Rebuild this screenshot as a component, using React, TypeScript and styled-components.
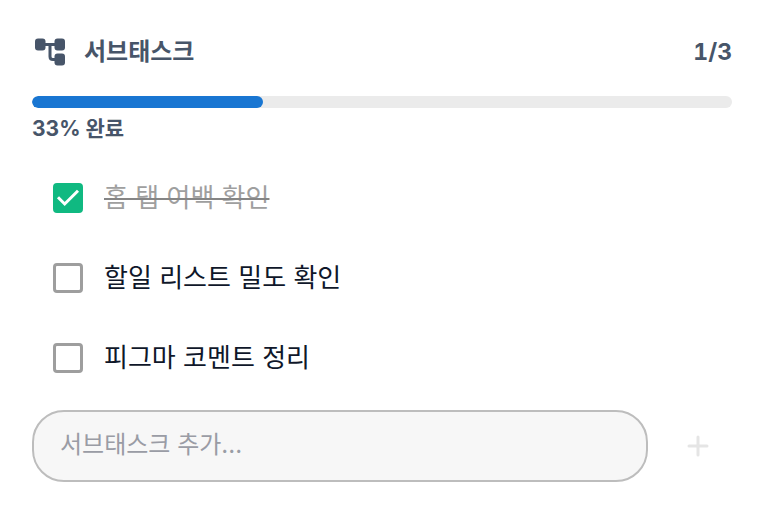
import React, { useState } from "react";
import styled, { createGlobalStyle } from "styled-components";

const GlobalStyle = createGlobalStyle`
  *, *::before, *::after { box-sizing: border-box; }
  body {
    margin: 0;
    background: #ffffff;
    color: #0f172a;
    font-family: Inter, "Noto Sans CJK KR", sans-serif;
  }
`;

const Panel = styled.main`
  padding: 32px;
`;

const Header = styled.header`
  display: flex;
  align-items: center;
  gap: 16px;
  height: 40px;
  color: #475569;
`;

const Title = styled.h2`
  flex: 1;
  margin: 0;
  font-size: 24px;
  line-height: 40px;
  font-weight: 700;
`;

const Count = styled.span`
  font-size: 23px;
  line-height: 40px;
  font-weight: 700;
  font-variant-numeric: tabular-nums;
`;

const Track = styled.div`
  height: 12px;
  margin-top: 24px;
  border-radius: 6px;
  background: #ebebeb;
  overflow: hidden;
`;

const Fill = styled.div`
  height: 100%;
  border-radius: 6px;
  background: #1976d2;
`;

const Caption = styled.p`
  margin: 4px 0 0;
  font-size: 21px;
  line-height: 34px;
  font-weight: 700;
  color: #475569;
`;

const List = styled.ul`
  list-style: none;
  margin: 12px 0 0;
  padding: 0;
`;

const Row = styled.label<{ $done: boolean }>`
  display: flex;
  align-items: center;
  gap: 16px;
  height: 80px;
  padding-left: 16px;
  font-size: 26px;
  line-height: 40px;
  color: ${(p) => (p.$done ? "#9f9f9f" : "#0f172a")};
  text-decoration: ${(p) => (p.$done ? "line-through 2px #858585" : "none")};
`;

const CheckHolder = styled.span`
  display: grid;
  width: 40px;
  height: 40px;
  place-items: center;

  > * { grid-area: 1 / 1; }
`;

const Check = styled.input`
  appearance: none;
  width: 30px;
  height: 30px;
  margin: 0;
  border: 3px solid #9e9e9e;
  border-radius: 4px;

  &:checked {
    border-color: #10b981;
    background: #10b981;
  }
`;

const Tick = styled.svg`
  width: 30px;
  height: 30px;
  pointer-events: none;
`;

const AddForm = styled.form`
  display: flex;
  align-items: center;
  gap: 16px;
  margin-top: 12px;
`;

const AddInput = styled.input`
  flex: 1;
  min-width: 0;
  height: 72px;
  padding: 0 26px 4px;
  border: 2px solid #bdbdbd;
  border-radius: 32px;
  background: #f7f7f7;
  color: #0f172a;
  font: inherit;
  font-size: 24px;

  &::placeholder { color: #9a9ca5; opacity: 1; }
`;

const AddButton = styled.button`
  display: grid;
  place-items: center;
  width: 68px;
  height: 68px;
  padding: 0;
  border: 0;
  background: none;
  color: #e5e5e5;
`;

const TreeIcon = () => (
  <svg width="36" height="36" viewBox="0 0 24 24" aria-hidden>
    <g fill="currentColor">
      <rect x="2" y="3" width="7" height="8" rx="2" />
      <rect x="15" y="3" width="7" height="8" rx="2" />
      <rect x="15" y="13" width="7" height="8" rx="2" />
    </g>
    <path d="M8 7H16M12 7V15Q12 17 14 17H16" fill="none" stroke="currentColor" strokeWidth="2" />
  </svg>
);

const initialTasks = [
  { id: 1, text: "홈 탭 여백 확인", done: true },
  { id: 2, text: "할일 리스트 밀도 확인", done: false },
  { id: 3, text: "피그마 코멘트 정리", done: false },
];

export default function App() {
  const [tasks, setTasks] = useState(initialTasks);
  const [draft, setDraft] = useState("");
  const done = tasks.filter((t) => t.done).length;
  const percent = Math.round((done / tasks.length) * 100);

  const toggle = (id: number) =>
    setTasks(tasks.map((t) => (t.id === id ? { ...t, done: !t.done } : t)));

  const add = (e: React.FormEvent) => {
    e.preventDefault();
    if (!draft.trim()) return;
    setTasks([...tasks, { id: Date.now(), text: draft.trim(), done: false }]);
    setDraft("");
  };

  return (
    <>
      <GlobalStyle />
      <Panel>
        <Header>
          <TreeIcon />
          <Title>서브태스크</Title>
          <Count>{done}/{tasks.length}</Count>
        </Header>
        <Track role="progressbar" aria-label="서브태스크" aria-valuenow={percent} aria-valuemin={0} aria-valuemax={100}>
          <Fill style={{ width: `${percent}%` }} />
        </Track>
        <Caption>{percent}% 완료</Caption>
        <List>
          {tasks.map((t) => (
            <li key={t.id}>
              <Row $done={t.done}>
                <CheckHolder>
                  <Check type="checkbox" checked={t.done} onChange={() => toggle(t.id)} />
                  {t.done && (
                    <Tick viewBox="0 0 30 30" aria-hidden>
                      <path d="M5 14.3 L11.7 21 L25 7.7" fill="none" stroke="#fff" strokeWidth="3" />
                    </Tick>
                  )}
                </CheckHolder>
                <span>{t.text}</span>
              </Row>
            </li>
          ))}
        </List>
        <AddForm onSubmit={add}>
          <AddInput aria-label="서브태스크 추가" placeholder="서브태스크 추가..." value={draft} onChange={(e) => setDraft(e.target.value)} />
          <AddButton type="submit" aria-label="추가" disabled={!draft.trim()}>
            <svg width="36" height="36" viewBox="0 0 24 24" aria-hidden>
              <path d="M6 12H18M12 6V18" fill="none" stroke="currentColor" strokeWidth="2" strokeLinecap="round" />
            </svg>
          </AddButton>
        </AddForm>
      </Panel>
    </>
  );
}
